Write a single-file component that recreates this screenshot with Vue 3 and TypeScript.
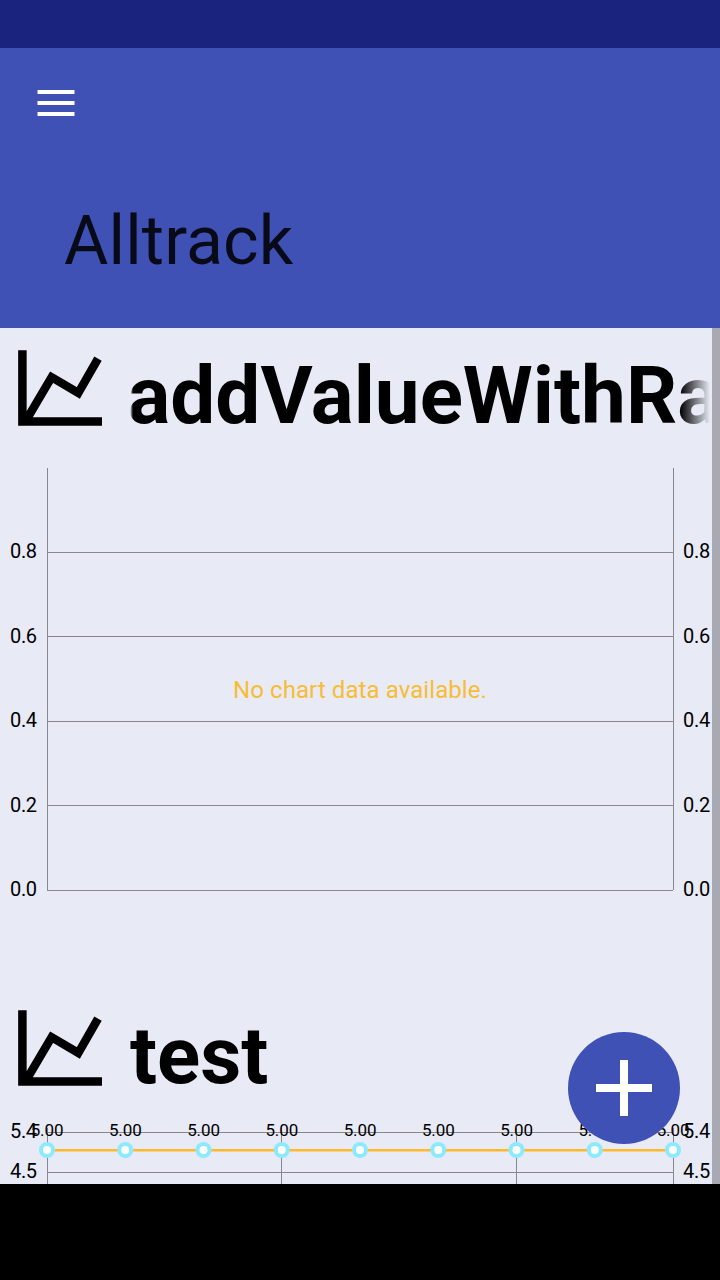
<script setup lang="ts">
interface Tick {
  label: string
  y: number
  baseline: number
}

const emptyTicks: Tick[] = [
  { label: '0.8', y: 84.5, baseline: 90 },
  { label: '0.6', y: 168.5, baseline: 175 },
  { label: '0.4', y: 253.5, baseline: 259 },
  { label: '0.2', y: 337.5, baseline: 344 },
  { label: '0.0', y: 422.5, baseline: 428 },
]

const testTicks: Tick[] = [
  { label: '5.4', y: 4.5, baseline: 10 },
  { label: '4.5', y: 44.5, baseline: 50 },
]

const points: number[] = Array.from({ length: 9 }, (_, i) => 47 + i * 78.25)
const verticals: number[] = [47.5, 281.5, 516.5, 673.5]
</script>

<template>
  <div class="screen">
    <div class="status"></div>
    <header class="bar">
      <button class="menu" aria-label="Menu">
        <svg width="38" height="26" viewBox="0 0 38 26">
          <path d="M.5 0h37v4H.5zM.5 11h37v4H.5zM.5 22h37v4H.5z" fill="#fff" />
        </svg>
      </button>
      <h1>Alltrack</h1>
    </header>

    <div class="body">
      <main class="list">
        <section class="card">
          <div class="heading">
            <svg class="icon" width="86" height="78" viewBox="0 0 86 78">
              <path d="M4.4 2.2v71.2H84M7.5 73.4L33.6 29.2 60.3 45 80 10.6" fill="none" stroke="#000" stroke-width="8.5" />
            </svg>
            <h2 class="fade">addValueWithRa</h2>
          </div>
          <svg class="chart" width="712" height="440" viewBox="0 0 712 440">
            <g class="grid">
              <path d="M47.5 0V422M673.5 0V422" />
              <path v-for="t in emptyTicks" :key="t.label" :d="`M47 ${t.y}H673`" />
            </g>
            <g class="axis">
              <template v-for="t in emptyTicks" :key="t.label">
                <text x="36.8" :y="t.baseline" text-anchor="end">{{ t.label }}</text>
                <text x="683" :y="t.baseline">{{ t.label }}</text>
              </template>
            </g>
            <text class="empty" x="360" y="230" text-anchor="middle">No chart data available.</text>
          </svg>
        </section>

        <section class="card">
          <div class="heading">
            <svg class="icon" width="86" height="78" viewBox="0 0 86 78">
              <path d="M4.4 2.2v71.2H84M7.5 73.4L33.6 29.2 60.3 45 80 10.6" fill="none" stroke="#000" stroke-width="8.5" />
            </svg>
            <h2>test</h2>
          </div>
          <svg class="chart" width="712" height="440" viewBox="0 0 712 440">
            <g class="grid">
              <path v-for="x in verticals" :key="x" :d="`M${x} 0V440`" />
              <path v-for="t in testTicks" :key="t.label" :d="`M47 ${t.y}H673`" />
            </g>
            <g class="axis">
              <template v-for="t in testTicks" :key="t.label">
                <text x="36.8" :y="t.baseline" text-anchor="end">{{ t.label }}</text>
                <text x="683" :y="t.baseline">{{ t.label }}</text>
              </template>
            </g>
            <path d="M47 22.2H673" stroke="#ffb92b" stroke-width="2.4" />
            <g v-for="x in points" :key="x">
              <text class="value" :x="x" y="8" text-anchor="middle">5.00</text>
              <circle :cx="x" cy="22" r="8" fill="#8ceaff" />
              <circle :cx="x" cy="22" r="4" fill="#fff" />
            </g>
          </svg>
        </section>
      </main>
      <div class="edge"></div>
      <button class="fab" aria-label="Add">
        <svg width="56" height="56" viewBox="0 0 56 56">
          <path d="M24 0h8v24h24v8H32v24h-8V32H0v-8h24z" fill="#fff" />
        </svg>
      </button>
    </div>
    <div class="nav"></div>
  </div>
</template>

<style scoped>
.screen {
  display: flex;
  flex-direction: column;
  width: 720px;
  height: 1280px;
  overflow: hidden;
  font-family: Roboto, "Liberation Sans", sans-serif;
  color: #000;
}
button {
  border: 0;
  padding: 0;
  background: none;
}
svg {
  display: block;
}
.chart {
  overflow: visible;
}
.status {
  height: 48px;
  background: #1a237e;
}
.bar {
  box-sizing: border-box;
  height: 280px;
  padding: 42px 37px 0;
  background: #3f51b5;
}
.menu {
  display: block;
}
h1 {
  margin: 85px 0 0 27px;
  font-size: 68px;
  line-height: 80px;
  font-weight: 400;
  letter-spacing: 0.12px;
  color: rgba(0, 0, 0, 0.87);
}
.body {
  position: relative;
  display: flex;
  height: 856px;
  overflow: hidden;
  background: #e8eaf6;
}
.list {
  width: 712px;
}
.card {
  height: 660px;
}
.heading {
  display: flex;
  align-items: flex-start;
  height: 140px;
}
.icon {
  flex: none;
  margin: 20px 0 0 18px;
}
h2 {
  flex: 1;
  min-width: 0;
  margin: 21px 2px 0 26px;
  font-size: 80px;
  line-height: 94px;
  font-weight: 700;
  white-space: nowrap;
  overflow: hidden;
}
.fade {
  text-indent: -2.5px;
  -webkit-mask-image: linear-gradient(to right, transparent, #000 3px, #000 calc(100% - 30px), transparent);
  mask-image: linear-gradient(to right, transparent, #000 3px, #000 calc(100% - 30px), transparent);
}
.grid path {
  stroke: #88888c;
  stroke-width: 1;
}
.axis text {
  font-size: 20px;
  letter-spacing: -0.3px;
}
.value {
  font-size: 17px;
  letter-spacing: -0.1px;
}
.empty {
  font-size: 24px;
  letter-spacing: 0.08px;
  fill: #f7bd34;
}
.edge {
  width: 8px;
  background: #a8a9b3;
}
.fab {
  position: absolute;
  right: 40px;
  bottom: 40px;
  display: grid;
  place-items: center;
  width: 112px;
  height: 112px;
  border-radius: 50%;
  background: #3f51b5;
}
.nav {
  height: 96px;
  background: #000;
}
</style>
